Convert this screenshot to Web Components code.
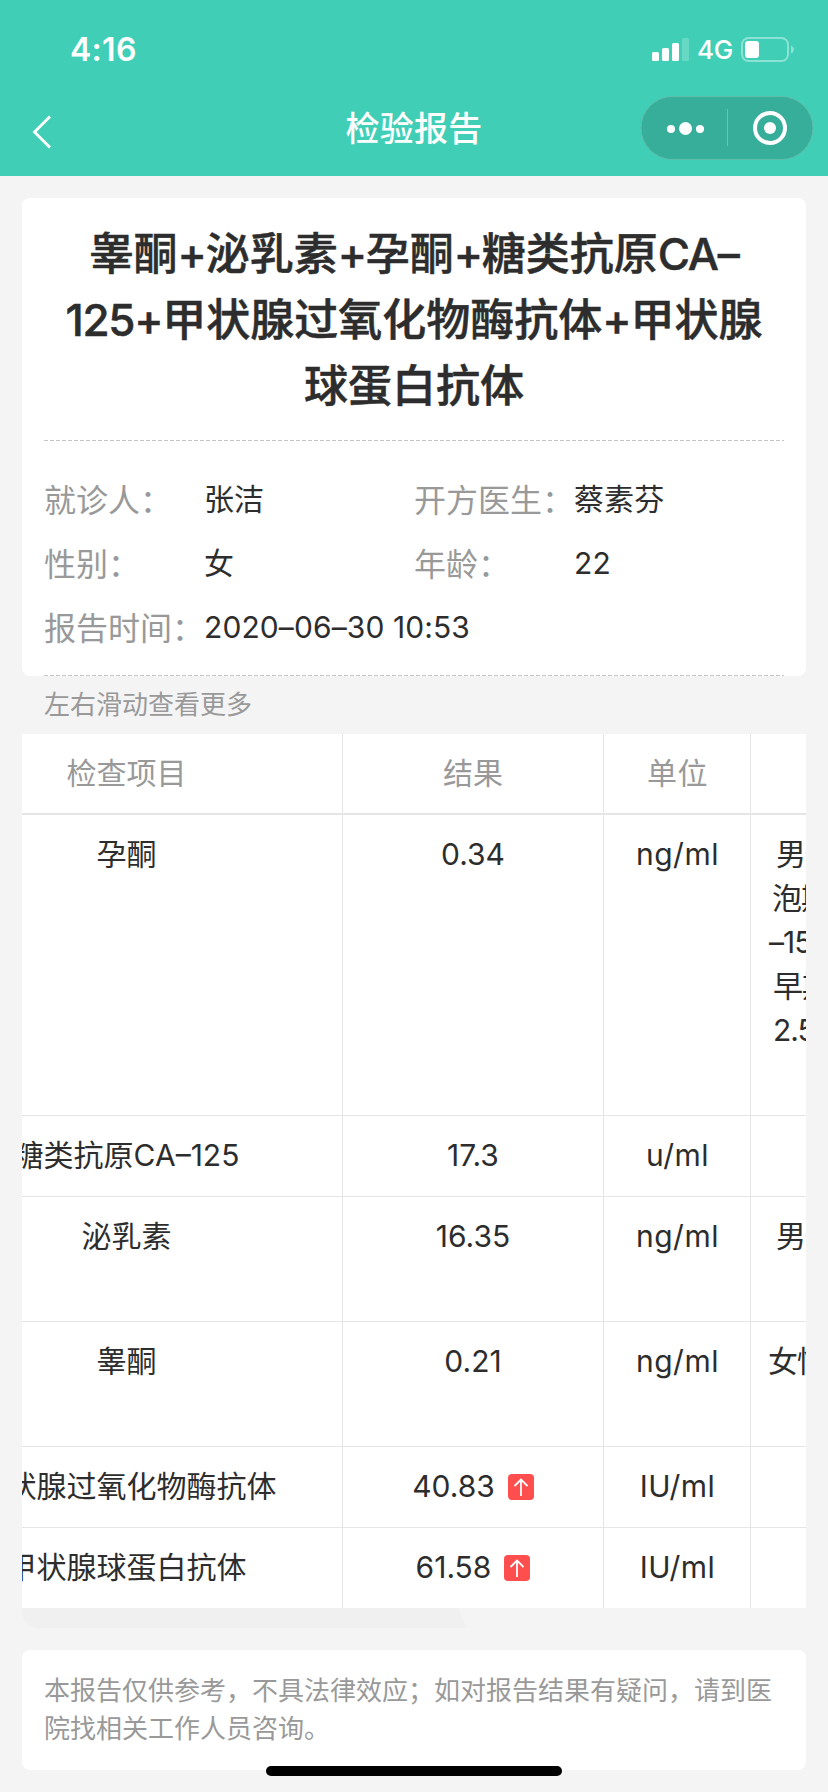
<!DOCTYPE html>
<html lang="zh-CN">
<head>
<meta charset="UTF-8">
<meta name="viewport" content="width=device-width, initial-scale=1.0">
<title>检验报告</title>
<style>
    body{
        margin: 0;
        height: 1792px;
        overflow: hidden;
        background-color: #f4f4f4;
        color: #2d2d2d;
        font-family: Inter, "Noto Sans CJK SC", sans-serif;
        font-size: 30px;
        font-weight: 380;
    }
    .tight{
        letter-spacing: -1.3px;
    }
</style>
</head>
<body>
<report-page>
    <nav-header slot="header" time="4:16" network="4G">检验报告</nav-header>
    <report-card>
        <span slot="title">睾酮<span class="tight">+</span>泌乳素<span class="tight">+</span>孕酮<span class="tight">+</span>糖类抗原<span class="tight">CA–</span><br><span class="tight">125+</span>甲状腺过氧化物酶抗体<span class="tight">+</span>甲状腺<br>球蛋白抗体</span>
        <info-item label="就诊人：">张洁</info-item>
        <info-item label="开方医生：">蔡素芬</info-item>
        <info-item label="性别：">女</info-item>
        <info-item label="年龄：">22</info-item>
        <info-item label="报告时间：" wide>2020–06–30 10:53</info-item>
    </report-card>
    <swipe-hint>左右滑动查看更多</swipe-hint>
    <result-table>
        <result-row head>
            <span slot="name">检查项目</span>
            <span slot="value">结果</span>
            <span slot="unit">单位</span>
        </result-row>
        <result-row style="--row-height: 300px">
            <span slot="name">孕酮</span>
            <span slot="value">0.34</span>
            <span slot="unit">ng/ml</span>
            <range-line slot="range" style="--indent: 25px">男性</range-line>
            <range-line slot="range" style="--indent: 21px">泡期</range-line>
            <range-line slot="range" style="--indent: 18px">–15</range-line>
            <range-line slot="range" style="--indent: 22px">早期</range-line>
            <range-line slot="range" style="--indent: 22px">2.5</range-line>
        </result-row>
        <result-row>
            <span slot="name">糖类抗原CA–125</span>
            <span slot="value">17.3</span>
            <span slot="unit">u/ml</span>
        </result-row>
        <result-row style="--row-height: 124px">
            <span slot="name">泌乳素</span>
            <span slot="value">16.35</span>
            <span slot="unit">ng/ml</span>
            <range-line slot="range" style="--indent: 25px">男性</range-line>
        </result-row>
        <result-row style="--row-height: 124px">
            <span slot="name">睾酮</span>
            <span slot="value">0.21</span>
            <span slot="unit">ng/ml</span>
            <range-line slot="range" style="--indent: 17px">女性</range-line>
        </result-row>
        <result-row>
            <span slot="name">甲状腺过氧化物酶抗体</span>
            <span slot="value">40.83</span>
            <up-badge slot="value"></up-badge>
            <span slot="unit">IU/ml</span>
        </result-row>
        <result-row last>
            <span slot="name">甲状腺球蛋白抗体</span>
            <span slot="value">61.58</span>
            <up-badge slot="value"></up-badge>
            <span slot="unit">IU/ml</span>
        </result-row>
    </result-table>
    <scroll-track></scroll-track>
    <report-notice>本报告仅供参考，不具法律效应；如对报告结果有疑问，请到医院找相关工作人员咨询。</report-notice>
    <home-indicator slot="overlay"></home-indicator>
</report-page>

<script>
// every component only differs in its markup, so the shadow root is attached here
class BaseElement extends HTMLElement{
    constructor(){
        super();
        this.attachShadow({mode: 'open'})
        this.shadowRoot.innerHTML = this.render()
    }
}

customElements.define('report-page', class extends BaseElement{
    render(){
        return /*html*/`
<style>
    :host{
        display: block;
        position: relative;
        width: 828px;
        height: 1792px;
    }
    main{
        display: flex;
        flex-direction: column;
        padding: 22px 22px 0;
    }
</style>
<slot name="header"></slot>
<main><slot></slot></main>
<slot name="overlay"></slot>`
    }
})

customElements.define('nav-header', class extends BaseElement{
    render(){
        return /*html*/`
<style>
    :host{
        display: block;
        height: 176px;
        background-color: #40cfb6;
        color: white;
    }
    .status{
        display: flex;
        justify-content: space-between;
        align-items: center;
        box-sizing: border-box;
        height: 96px;
        padding: 4px 34px 0 70px;
    }
    .time{
        margin-top: -2px;
        font-size: 32px;
        font-weight: 600;
        letter-spacing: 0.3px;
    }
    .right{
        display: flex;
        align-items: center;
    }
    .network{
        margin: 0 8px 0 7px;
        font-size: 26px;
        font-weight: 450;
        letter-spacing: -0.3px;
        line-height: 32px;
    }
    .bar{
        display: grid;
        grid-template-columns: 188px 1fr 188px;
        align-items: center;
        height: 64px;
    }
    .back{
        margin-left: 32px;
    }
    .title{
        padding-top: 2px;
        text-align: center;
        font-size: 34px;
        font-weight: 500;
        letter-spacing: 0.3px;
        line-height: 62px;
    }
    svg{
        display: block;
    }
</style>
<div class="status">
    <span class="time">${this.getAttribute('time')}</span>
    <div class="right">
        <svg width="38" height="26" viewBox="0 0 38 26" fill="white">
            <rect x="0" y="15" width="7" height="9" rx="1.5"/>
            <rect x="10" y="11" width="7" height="13" rx="1.5"/>
            <rect x="20" y="6" width="7" height="18" rx="1.5"/>
            <rect x="30" y="1" width="7" height="23" rx="1.5" opacity="0.2"/>
        </svg>
        <span class="network">${this.getAttribute('network')}</span>
        <svg width="53" height="26" viewBox="0 0 53 26">
            <rect x="1" y="1" width="46" height="23" rx="6.5" fill="none" stroke="white" stroke-width="2" opacity="0.4"/>
            <rect x="4" y="4" width="14" height="17" rx="3" fill="white"/>
            <path d="M50 8.5 Q53 10 53 12.5 Q53 15 50 16.5z" fill="white" opacity="0.4"/>
        </svg>
    </div>
</div>
<div class="bar">
    <svg class="back" width="22" height="36" viewBox="0 0 22 36" style="margin-top: 8px">
        <path d="M18 2.5 L2.5 18 L18 33.5" fill="none" stroke="white" stroke-width="2.8"/>
    </svg>
    <div class="title"><slot></slot></div>
    <svg width="174" height="64" viewBox="0 0 174 64">
        <rect x="1" y="0.5" width="172" height="63" rx="31.5" fill="#37ae99" stroke="#5fbdac"/>
        <circle cx="31" cy="33" r="4" fill="white"/>
        <circle cx="45.5" cy="32.5" r="6.5" fill="white"/>
        <circle cx="60" cy="33" r="4" fill="white"/>
        <path d="M87.5 13V50" stroke="#69c2b2"/>
        <circle cx="130" cy="32" r="15" fill="none" stroke="white" stroke-width="4"/>
        <circle cx="130" cy="32" r="6" fill="white"/>
    </svg>
</div>`
    }
})

customElements.define('report-card', class extends BaseElement{
    render(){
        return /*html*/`
<style>
    :host{
        display: block;
        box-sizing: border-box;
        height: 478px;
        padding: 23px 22px 0;
        border-radius: 8px;
        background-color: white;
    }
    h1{
        margin: 0;
        text-align: center;
        font-size: 44px;
        font-weight: 500;
        -webkit-text-stroke: 0.5px #2d2d2d;
        line-height: 66px;
        white-space: nowrap;
    }
    .dash{
        height: 1px;
        background: repeating-linear-gradient(90deg, #c4c4c4 0 4px, transparent 4px 6px);
    }
    h1 + .dash{
        margin-top: 21px;
    }
    .info{
        display: grid;
        grid-template-columns: 370px 370px;
        grid-auto-rows: 64px;
        padding: 27px 0 15px;
    }
</style>
<h1><slot name="title"></slot></h1>
<div class="dash"></div>
<div class="info"><slot></slot></div>
<div class="dash"></div>`
    }
})

customElements.define('info-item', class extends BaseElement{
    render(){
        return /*html*/`
<style>
    :host{
        display: grid;
        grid-template-columns: 160px 1fr;
        line-height: 62px;
        white-space: nowrap;
    }
    :host([wide]){
        grid-column: span 2;
    }
    .label{
        color: #999;
        font-size: 32px;
        line-height: 66px;
    }
    .text{
        letter-spacing: 0.1px;
    }
</style>
<span class="label">${this.getAttribute('label')}</span>
<span class="text"><slot></slot></span>`
    }
})

customElements.define('swipe-hint', class extends BaseElement{
    render(){
        return /*html*/`
<style>
    :host{
        display: block;
        height: 58px;
        padding-left: 22px;
        color: #999;
        font-size: 26px;
        line-height: 58px;
    }
</style>
<slot></slot>`
    }
})

customElements.define('result-table', class extends BaseElement{
    render(){
        // the table is scrolled to the right by 114px
        return /*html*/`
<style>
    :host{
        display: block;
        overflow: hidden;
        background-color: white;
    }
    .rows{
        width: 1100px;
        margin-left: -114px;
    }
</style>
<div class="rows"><slot></slot></div>`
    }
})

customElements.define('result-row', class extends BaseElement{
    render(){
        return /*html*/`
<style>
    :host{
        display: grid;
        grid-template-columns: 435px 261px 147px 1fr;
        height: var(--row-height, 80px);
        border-bottom: 1px solid #e5e5e5;
        line-height: 44px;
        white-space: nowrap;
    }
    :host([head]){
        height: 79px;
        border-bottom-width: 2px;
        color: #999;
    }
    :host([last]){
        border-bottom: none;
    }
    .cell{
        padding-top: 17px;
        text-align: center;
        border-right: 1px solid #e5e5e5;
    }
    .name{
        padding-left: 3px;
    }
    .value{
        display: flex;
        justify-content: center;
        align-items: flex-start;
        gap: 13px;
    }
    .unit{
        padding-left: 1px;
        letter-spacing: 0.5px;
    }
    .range{
        padding-top: 17px;
    }
</style>
<div class="cell name"><slot name="name"></slot></div>
<div class="cell value"><slot name="value"></slot></div>
<div class="cell unit"><slot name="unit"></slot></div>
<div class="range"><slot name="range"></slot></div>`
    }
})

customElements.define('range-line', class extends BaseElement{
    render(){
        return /*html*/`
<style>
    :host{
        display: block;
        padding-left: var(--indent);
        letter-spacing: -1px;
    }
</style>
<slot></slot>`
    }
})

customElements.define('up-badge', class extends BaseElement{
    render(){
        return /*html*/`
<style>
    :host{
        display: block;
        width: 26px;
        height: 26px;
        margin-top: 10px;
    }
    svg{
        display: block;
    }
</style>
<svg width="26" height="26" viewBox="0 0 26 26">
    <rect width="26" height="26" rx="4" fill="#ff4e4e"/>
    <path d="M13 22V6 M6.5 12 L13 5.5 L19.5 12" fill="none" stroke="white" stroke-width="1.8"/>
</svg>`
    }
})

customElements.define('scroll-track', class extends BaseElement{
    render(){
        return /*html*/`
<style>
    :host{
        display: block;
        width: 445px;
        height: 20px;
        margin-bottom: 22px;
    }
    svg{
        display: block;
    }
</style>
<svg width="445" height="20" viewBox="0 0 445 20">
    <path d="M0 0H436L445 20H16Q3 20 0 5z" fill="#f0f0f0"/>
</svg>`
    }
})

customElements.define('report-notice', class extends BaseElement{
    render(){
        return /*html*/`
<style>
    :host{
        display: block;
        box-sizing: border-box;
        height: 120px;
        padding: 22px;
        border-radius: 8px;
        background-color: white;
        color: #999;
        font-size: 26px;
        line-height: 38px;
    }
</style>
<slot></slot>`
    }
})

customElements.define('home-indicator', class extends BaseElement{
    render(){
        return /*html*/`
<style>
    :host{
        position: absolute;
        left: 266px;
        bottom: 16px;
        width: 296px;
        height: 10px;
        border-radius: 5px;
        background-color: black;
    }
</style>`
    }
})
</script>
</body>
</html>
